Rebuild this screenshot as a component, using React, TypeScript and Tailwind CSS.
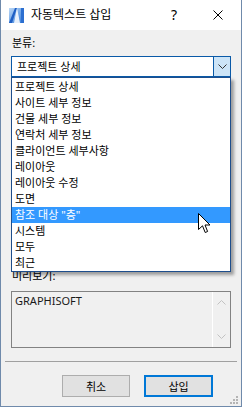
import React from "react";

const items = [
  "프로젝트 상세",
  "사이트 세부 정보",
  "건물 세부 정보",
  "연락처 세부 정보",
  "클라이언트 세부사항",
  "레이아웃",
  "레이아웃 수정",
  "도면",
  "참조 대상 \"층\"",
  "시스템",
  "모두",
  "최근",
];

function TitleIcon() {
  return (
    <svg width="15" height="15" viewBox="0 0 15 15">
      <defs>
        <linearGradient id="ti" x1="0" y1="0" x2="1" y2="1">
          <stop offset="0" stopColor="#bcd9f7" />
          <stop offset="1" stopColor="#2f78d8" />
        </linearGradient>
      </defs>
      <rect x="0" y="0" width="15" height="15" fill="url(#ti)" />
      <polygon points="0,15 6,0 8,0 3,15" fill="#1f5fc4" />
      <polygon points="8,0 11,15 5,15" fill="#ffffff" opacity="0.85" />
      <rect x="12" y="0" width="3" height="15" fill="#2c6fd0" />
    </svg>
  );
}

function Chevron({ up = false, color }: { up?: boolean; color: string }) {
  return (
    <svg width="9" height="5" viewBox="0 0 9 5">
      <polyline
        points={up ? "0.5,4.5 4.5,0.5 8.5,4.5" : "0.5,0.5 4.5,4.5 8.5,0.5"}
        fill="none"
        stroke={color}
        strokeWidth="1"
      />
    </svg>
  );
}

export default function App() {
  return (
    <div className="relative w-[242px] h-[407px] bg-[#f0f0f0] border-l border-r border-b border-[#6f8aab] flex flex-col font-['Noto_Sans','Noto_Sans_CJK_KR',sans-serif] text-black overflow-hidden">
      {/* Title bar */}
      <div className="h-[30px] bg-white flex items-center shrink-0">
        <div className="ml-[8px] mt-[1px]">
          <TitleIcon />
        </div>
        <span className="ml-[7px] text-[12px] leading-none">자동텍스트 삽입</span>
        <span className="ml-auto text-[14px] leading-none mr-[36px]">?</span>
        <svg width="10" height="10" viewBox="0 0 10 10" className="mr-[18px]">
          <line x1="0.5" y1="0.5" x2="9.5" y2="9.5" stroke="#000" strokeWidth="1" />
          <line x1="9.5" y1="0.5" x2="0.5" y2="9.5" stroke="#000" strokeWidth="1" />
        </svg>
      </div>

      {/* Body */}
      <div className="flex flex-col px-[10px]">
        <div className="mt-[6px] h-[14px] leading-[14px] text-[11px] pl-[1px]">분류:</div>
        <div className="mt-[6px] h-[21px] w-[220px] border border-[#0a5aa8] bg-white flex">
          <div className="flex-1 pl-[5px] text-[11px] leading-[19px]">프로젝트 상세</div>
          <div className="w-[17px] border-l border-[#0a5aa8] bg-[#cce4f7] flex items-center justify-center">
            <Chevron color="#333" />
          </div>
        </div>

        <div className="mt-[192px] h-[14px] leading-[14px] text-[11px] pl-[1px]">미리보기:</div>
        <div className="mt-[8px] h-[57px] w-[220px] border border-[#828282] flex">
          <div className="flex-1 pl-[3px] pt-[1px] text-[11px] leading-[16px] text-[#1a1a1a]">GRAPHISOFT</div>
          <div className="w-[18px] border-l border-white flex flex-col items-center justify-between py-[8px]">
            <Chevron up color="#c2c2c2" />
            <Chevron color="#c2c2c2" />
          </div>
        </div>
      </div>

      <div className="mt-[13px] mx-[4px] h-px bg-[#a0a0a0]" />

      <div className="mt-[13px] flex pl-[61px] gap-[14px]">
        <button className="w-[68px] h-[22px] bg-[#e1e1e1] border border-[#adadad] text-[11px] leading-none">
          취소
        </button>
        <button className="w-[69px] h-[22px] bg-[#e1e1e1] border-2 border-[#0078d7] text-[11px] leading-none">
          삽입
        </button>
      </div>

      {/* Resize grip */}
      <svg width="9" height="9" viewBox="0 0 9 9" className="absolute right-[3px] bottom-[2px]">
        <rect x="7" y="1" width="2" height="2" fill="#b4b4b4" />
        <rect x="4" y="4" width="2" height="2" fill="#b4b4b4" />
        <rect x="7" y="4" width="2" height="2" fill="#b4b4b4" />
        <rect x="1" y="7" width="2" height="2" fill="#b4b4b4" />
        <rect x="4" y="7" width="2" height="2" fill="#b4b4b4" />
        <rect x="7" y="7" width="2" height="2" fill="#b4b4b4" />
      </svg>

      {/* Open dropdown list */}
      <div className="absolute top-[77px] left-[10px] w-[220px] h-[195px] bg-white border border-[#1e4e8c] pt-[1px] shadow-[3px_3px_3px_rgba(0,0,0,0.35)]">
        {items.map((it, i) => (
          <div
            key={it}
            className={
              "h-[16px] leading-[16px] pl-[3px] text-[11px] whitespace-nowrap " +
              (i === 8 ? "bg-[#3399ff] text-white" : "")
            }
          >
            {it}
          </div>
        ))}
      </div>

      {/* Mouse cursor */}
      <svg width="13" height="21" viewBox="0 0 13 21" className="absolute left-[197px] top-[213px]">
        <path
          d="M0.5 0.5 L0.5 16.5 L4.5 12.8 L7.2 19.5 L9.6 18.5 L7 12 L12 12 Z"
          fill="#fff"
          stroke="#000"
          strokeWidth="1"
          strokeLinejoin="miter"
        />
      </svg>
    </div>
  );
}
